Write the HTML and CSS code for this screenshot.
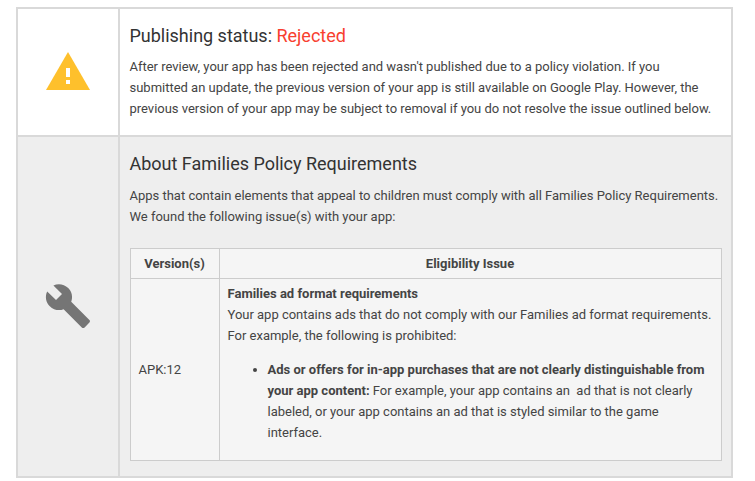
FILE: index.html
```html
<!DOCTYPE html>
<html lang="en">
<head>
<meta charset="utf-8">
<title>Publishing status</title>
<link rel="stylesheet" href="styles.css">
</head>
<body>
<div class="panel">
  <section class="row">
    <div class="side">
      <svg class="icon icon-warn" width="44" height="38" viewBox="0 0 44 38"><path fill="#fec02c" d="M22 0 44 38H0Z"/><path fill="#fff" d="M20 16h4v9h-4zM20 28h4v4h-4z"/></svg>
    </div>
    <div class="main">
      <h2 class="title">Publishing status: <span class="rejected">Rejected</span></h2>
      <p class="text">After review, your app has been rejected and wasn't published due to a policy violation. If you submitted an update, the previous version of your app is still available on Google Play. However, the previous version of your app may be subject to removal if you do not resolve the issue outlined below.</p>
    </div>
  </section>
  <section class="row row-grey">
    <div class="side">
      <svg class="icon icon-tool" width="48" height="48" viewBox="0 0 24 24"><path fill="#757575" d="M22.7 19 13.6 9.900c.9-2.300.4-5-1.500-6.900-2-2-5-2.400-7.400-1.300L9 6 6 9 1.600 4.700C.4 7.100.9 10.100 2.900 12.100c1.900 1.900 4.600 2.400 6.900 1.500l9.100 9.100c.4.400 1 .4 1.400 0l2.300-2.300c.5-.4.5-1.100.1-1.400z"/></svg>
    </div>
    <div class="main">
      <h2 class="title">About Families Policy Requirements</h2>
      <p class="text text-second">Apps that contain elements that appeal to children must comply with all Families Policy Requirements. We found the following issue(s) with your app:</p>
      <table class="issues">
        <thead>
          <tr><th class="col-version">Version(s)</th><th>Eligibility Issue</th></tr>
        </thead>
        <tbody>
          <tr>
            <td>APK:12</td>
            <td class="issue-cell">
              <strong>Families ad format requirements</strong><br>
              Your app contains ads that do not comply with our Families ad format requirements. For example, the following is prohibited:
              <ul class="list">
                <li><strong>Ads or offers for in-app purchases that are not clearly distinguishable from your app content:</strong> For example, your app contains an&nbsp; ad that is not clearly labeled, or your app contains an ad that is styled similar to the game interface.</li>
              </ul>
            </td>
          </tr>
        </tbody>
      </table>
    </div>
  </section>
</div>
</body>
</html>
```
FILE: styles.css
```css
* { box-sizing: border-box; }
html, body { margin: 0; background: #fff; }
body {
  padding: 7px 22px 0 16px;
  font-family: Roboto, sans-serif;
  font-size: 13px;
  line-height: 21px;
  letter-spacing: -0.01px;
  color: #444;
}
strong { letter-spacing: 0; }
.panel { border: 2px solid #d9d9d9; width: 717px; }
.row { display: flex; height: 128px; border-bottom: 2px solid #d9d9d9; }
.row-grey { height: 339px; border-bottom: 0; background: #eee; }
.side {
  flex: none;
  width: 102px;
  border-right: 2px solid #d9d9d9;
  display: flex;
  align-items: center;
  justify-content: center;
}
.icon { display: block; }
.icon-warn { margin-bottom: 2px; }
.icon-tool { margin-bottom: 1px; }
.main { flex: 1; min-width: 0; padding: 14px 10px 0 9.500px; }
.title {
  margin: 0 0 7px;
  font-size: 18px;
  line-height: 26px;
  font-weight: 400;
  color: #333;
}
.rejected { color: #f8402f; }
.text { margin: 0; }
.text-second { padding-top: 1px; }
.issues {
  margin: 21px 0 0 0.500px;
  width: 592px;
  height: 213px;
  border-collapse: collapse;
  background: #f5f5f5;
}
.issues th, .issues td { border: 1px solid #ccc; padding: 4px 7.500px; }
.issues th { height: 30px; font-weight: 700; text-align: center; letter-spacing: 0; padding: 4px 8px 4px 7px; }
.col-version { width: 89px; }
.issues td { vertical-align: middle; }
.issues .issue-cell { vertical-align: top; }
.list { margin: 13px 0 0; padding-left: 40px; }
```
